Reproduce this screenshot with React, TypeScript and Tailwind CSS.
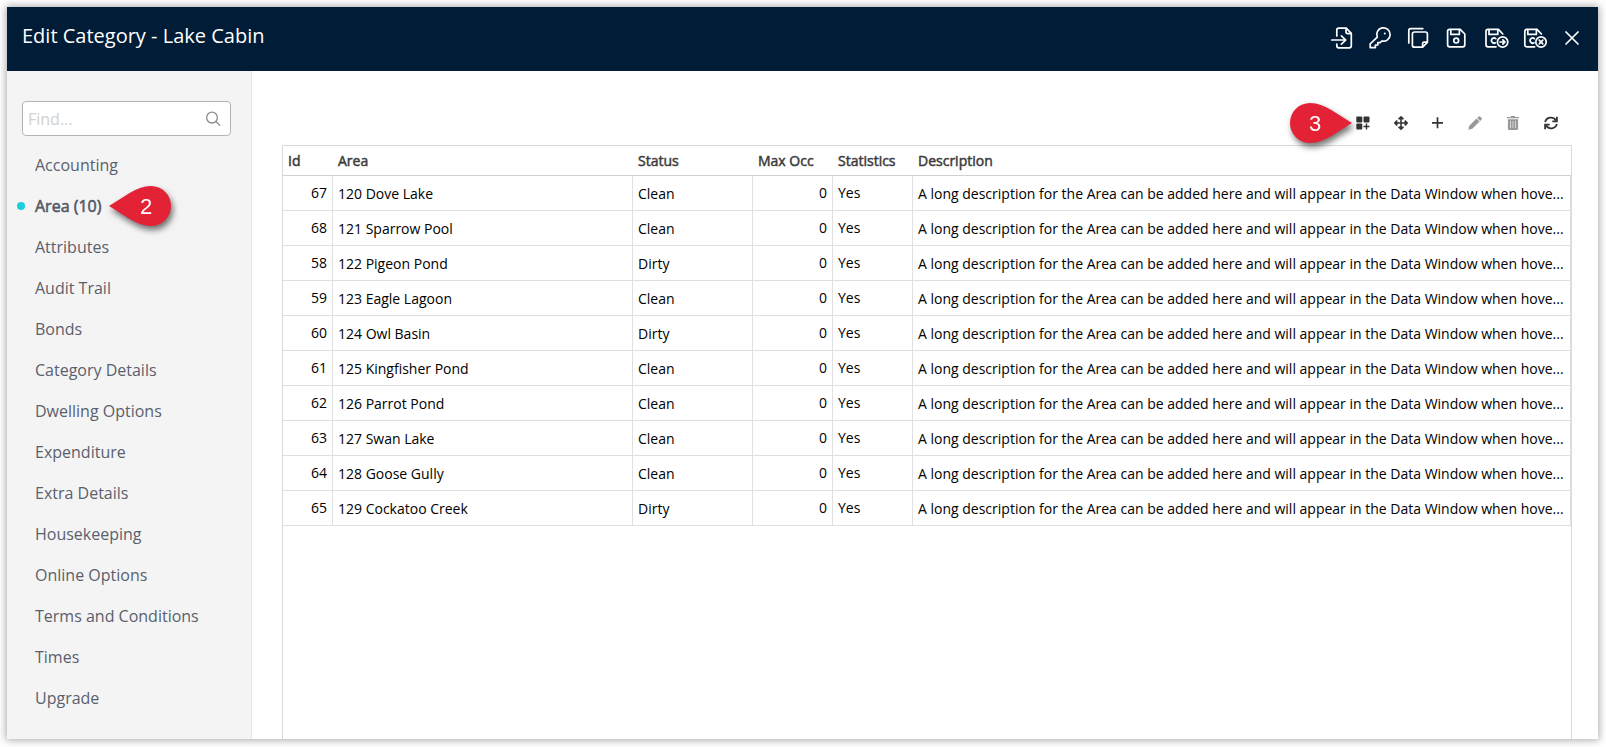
import type { ReactNode } from "react";
import { FaArrowsAlt } from "react-icons/fa";

const sections = [
  "Accounting",
  "Area (10)",
  "Attributes",
  "Audit Trail",
  "Bonds",
  "Category Details",
  "Dwelling Options",
  "Expenditure",
  "Extra Details",
  "Housekeeping",
  "Online Options",
  "Terms and Conditions",
  "Times",
  "Upgrade",
];

const description =
  "A long description for the Area can be added here and will appear in the Data Window when hove...";

const areas = [
  { id: 67, name: "120 Dove Lake", status: "Clean" },
  { id: 68, name: "121 Sparrow Pool", status: "Clean" },
  { id: 58, name: "122 Pigeon Pond", status: "Dirty" },
  { id: 59, name: "123 Eagle Lagoon", status: "Clean" },
  { id: 60, name: "124 Owl Basin", status: "Dirty" },
  { id: 61, name: "125 Kingfisher Pond", status: "Clean" },
  { id: 62, name: "126 Parrot Pond", status: "Clean" },
  { id: 63, name: "127 Swan Lake", status: "Clean" },
  { id: 64, name: "128 Goose Gully", status: "Clean" },
  { id: 65, name: "129 Cockatoo Creek", status: "Dirty" },
];

function Stroke({ width = 24, children }: { width?: number; children: ReactNode }) {
  return (
    <svg
      width={width}
      height={24}
      viewBox={`0 0 ${width} 24`}
      fill="none"
      stroke="currentColor"
      strokeWidth="1.7"
      strokeLinecap="round"
      strokeLinejoin="round"
      aria-hidden="true"
    >
      {children}
    </svg>
  );
}

const headerActions = [
  {
    label: "Open",
    icon: (
      <Stroke>
        <path d="M6.8 10V4.2q0-2 2-2h7.4l5.1 5.2v12.4q0 2-2 2H8.8q-2 0-2-2V18" />
        <path d="M16 2.4v3.4q0 1.8 1.8 1.8h3.4M1.8 14h13.4M11.4 9.8l4.4 4.2-4.4 4.2" />
      </Stroke>
    ),
  },
  {
    label: "Access",
    icon: (
      <Stroke>
        <path d="M9.3 11.2A6.7 6.7 0 1 1 13.8 15l-1.6 1.6H9.8v2.4H7.4v2.6H2.2v-3.8z" />
        <circle cx="16.8" cy="7.4" r="1" fill="currentColor" stroke="none" />
      </Stroke>
    ),
  },
  {
    label: "Copy",
    icon: (
      <Stroke>
        <path d="M2.8 17V4.6q0-2 2-2h12" />
        <path d="M8.4 6h11q2 0 2 2v8.4l-4.8 4.8H8.4q-2 0-2-2V8q0-2 2-2z" />
        <path d="M21.2 16.2h-3q-1.6 0-1.6 1.6v3" />
      </Stroke>
    ),
  },
  {
    label: "Save",
    icon: (
      <Stroke>
        <path d="M5.6 3.4h10.6l4.6 4.6v10.8q0 2-2 2H5.6q-2 0-2-2V5.4q0-2 2-2z" />
        <path d="M6.8 3.6v4.8h8.6V3.6" />
        <circle cx="12.2" cy="14.6" r="2.4" />
      </Stroke>
    ),
  },
  {
    label: "Save and continue",
    icon: (
      <Stroke width={27}>
        <path d="M14 20.8H6q-2 0-2-2V5.4q0-2 2-2h10.4l4.4 4.6" />
        <path d="M7 3.6v4.8h8.8V3.6M13.8 12.6a2.6 2.6 0 1 0-.4 4.2" />
        <circle cx="20.6" cy="16" r="5.2" />
        <path d="M18 16h4.8M20.8 13.8L23 16l-2.2 2.2" />
      </Stroke>
    ),
  },
  {
    label: "Save and close",
    icon: (
      <Stroke>
        <path d="M11.6 20.8H3.8q-2 0-2-2V5.4q0-2 2-2H14l4.4 4.6" />
        <path d="M4.8 3.6v4.8h8.6V3.6M11.4 12.6a2.6 2.6 0 1 0-.4 4.2" />
        <circle cx="18" cy="16" r="5.2" />
        <path d="M16.2 14.2l3.6 3.6M19.8 14.2l-3.6 3.6" />
      </Stroke>
    ),
  },
  {
    label: "Close",
    icon: (
      <Stroke width={22}>
        <path d="M5 6l12 12M17 6L5 18" />
      </Stroke>
    ),
  },
];

function Callout({ text, flip = false }: { text: string; flip?: boolean }) {
  return (
    <svg
      width="62"
      height="40"
      viewBox="0 0 62 40"
      className="block overflow-visible drop-shadow-[2px_4px_3px_rgba(0,0,0,0.55)]"
    >
      <path
        d={
          flip
            ? "M62 20C48 12 35 0 20 0a20 20 0 0 0 0 40C35 40 48 28 62 20z"
            : "M0 20C14 12 27 0 42 0a20 20 0 0 1 0 40C27 40 14 28 0 20z"
        }
        fill="#e42236"
      />
      <text
        x={flip ? 25 : 37}
        y="28"
        textAnchor="middle"
        fill="#fff"
        fontSize="22"
        fontFamily="'Liberation Sans', sans-serif"
      >
        {text}
      </text>
    </svg>
  );
}

function Sidebar() {
  return (
    <aside className="w-[245px] shrink-0 border-r border-[#e6e6e6] bg-[#f4f4f4] pt-[30px] pb-4">
      <div className="mr-5 ml-[15px] flex h-[35px] items-center rounded border border-[#b4b4b4] bg-white pr-[9px] pl-[5px]">
        <input
          type="text"
          placeholder="Find..."
          aria-label="Find"
          className="h-full min-w-0 flex-1 bg-transparent text-base outline-none placeholder:text-[#d0d0d0]"
        />
        <svg width="16" height="16" viewBox="0 0 16 16" fill="none" stroke="#8a8a8a" strokeWidth="1.3" aria-hidden="true">
          <circle cx="7" cy="6.6" r="5.4" />
          <path d="M10.9 10.5l4 3.9" strokeLinecap="round" />
        </svg>
      </div>
      <nav className="pt-2">
        <ul>
          {sections.map((name) => {
            const active = name === "Area (10)";
            return (
              <li key={name} className="flex h-[41px] items-center">
                <span className="flex w-7 justify-center">
                  {active && <span className="size-2 rounded-full bg-[#1ccfdb]" />}
                </span>
                <span className="relative">
                  <a
                    href="#"
                    aria-current={active ? "page" : undefined}
                    className={
                      active
                        ? "text-base text-[#555966] [-webkit-text-stroke:0.6px_#555966]"
                        : "text-base text-[#5a5f6d]"
                    }
                  >
                    {name}
                  </a>
                  {active && (
                    <span className="absolute top-1/2 left-full ml-2 -translate-y-1/2">
                      <Callout text="2" />
                    </span>
                  )}
                </span>
              </li>
            );
          })}
        </ul>
      </nav>
    </aside>
  );
}

function Toolbar() {
  return (
    <div className="flex h-[74px] shrink-0 items-end justify-end gap-6 pr-[14px] pb-[10px] text-[#333]">
      <div className="relative flex">
        <button type="button" aria-label="Quick add" className="flex h-6 w-[14px] items-center justify-center">
          <svg width="14" height="14" viewBox="0 0 14 14" fill="currentColor" aria-hidden="true">
            <rect x="0.3" y="0.6" width="6" height="5.8" rx="1" />
            <rect x="7.5" y="0.6" width="6" height="5.8" rx="1" />
            <rect x="0.3" y="7.6" width="6" height="5.8" rx="1" />
            <path d="M9.8 7.6h1.4v2.2h2.3v1.5h-2.3v2.2H9.8v-2.2H7.5V9.8h2.3z" />
          </svg>
        </button>
        <span className="absolute top-1/2 right-full mr-1 -translate-y-1/2">
          <Callout text="3" flip />
        </span>
      </div>
      <button type="button" aria-label="Move" className="flex h-6 w-[14px] items-center justify-center">
        <FaArrowsAlt size={14} />
      </button>
      <button type="button" aria-label="Add" className="flex h-6 w-3 items-center justify-center">
        <svg width="12" height="12" viewBox="0 0 12 12" stroke="currentColor" strokeWidth="1.7" aria-hidden="true">
          <path d="M5.5 .3v11M0 5.8h11" />
        </svg>
      </button>
      <button type="button" aria-label="Edit" className="flex h-6 w-[14px] items-center justify-center text-[#999]">
        <svg width="14" height="14" viewBox="0 0 14 14" fill="currentColor" aria-hidden="true">
          <path d="M10.4.7q1-.9 1.9 0l1.1 1.1q.9 1 0 1.9l-1.2 1.2-3-3z" />
          <path d="M8.5 2.4l3.1 3.1-7.3 7.3L.3 13.8l1-4.1z" />
        </svg>
      </button>
      <button type="button" aria-label="Delete" className="flex h-6 w-[14px] items-center justify-center text-[#999]">
        <svg width="12" height="14" viewBox="0 0 12 14" aria-hidden="true">
          <path d="M0 .9h3.6L4.2 0h3.6l.6.9H12v1.4H0z" fill="currentColor" />
          <path d="M.9 3.2h10.2v9.3q0 1.5-1.5 1.5H2.4Q.9 14 .9 12.5z" fill="currentColor" />
          <path d="M3.5 5v7M6 5v7M8.5 5v7" stroke="#fff" strokeWidth="0.6" />
        </svg>
      </button>
      <button type="button" aria-label="Refresh" className="flex h-6 w-[14px] items-center justify-center">
        <svg width="14" height="14" viewBox="0 0 14 14" fill="none" stroke="currentColor" strokeWidth="1.8" aria-hidden="true">
          <path d="M1.1 6A6 6 0 0 1 11.9 4.4M12.9 8A6 6 0 0 1 2.1 9.6" />
          <path d="M12.9.7v4.6H8.3M1.1 13.3V8.7h4.6" />
        </svg>
      </button>
    </div>
  );
}

const cell = "truncate border-r border-b border-[#e0e0e0] px-[5px]";
const textCell = "truncate border-r border-b border-[#e0e0e0] px-[5px] pt-[2px]";

function AreaTable() {
  return (
    <div className="flex-1 border-x border-t border-[#d9d9d9]">
      <table className="w-full table-fixed border-separate border-spacing-0 text-sm text-black">
        <colgroup>
          <col className="w-[50px]" />
          <col className="w-[300px]" />
          <col className="w-[120px]" />
          <col className="w-[80px]" />
          <col className="w-[80px]" />
          <col />
        </colgroup>
        <thead>
          <tr className="h-[30px] text-left text-[#3c3c3c] [-webkit-text-stroke:0.5px_#3c3c3c]">
            {["Id", "Area", "Status", "Max Occ", "Statistics", "Description"].map((h) => (
              <th key={h} scope="col" className="border-b border-[#d0d0d0] px-[5px] font-normal whitespace-nowrap">
                {h}
              </th>
            ))}
          </tr>
        </thead>
        <tbody>
          {areas.map((a) => (
            <tr key={a.id} className="h-[35px]">
              <td className={`${cell} text-right`}>{a.id}</td>
              <td className={textCell}>{a.name}</td>
              <td className={textCell}>{a.status}</td>
              <td className={`${cell} text-right`}>0</td>
              <td className={cell}>Yes</td>
              <td className={textCell}>{description}</td>
            </tr>
          ))}
        </tbody>
      </table>
    </div>
  );
}

export default function App() {
  return (
    <div className="flex min-h-screen bg-white pt-[7px] pr-2 pb-2 pl-[7px] font-['Open_Sans',sans-serif]">
      <div className="flex min-w-0 flex-1 flex-col bg-white shadow-[0_0_8px_1px_rgba(0,0,0,0.35)]">
        <header className="flex h-16 shrink-0 items-center justify-between bg-[#001c37] px-[15px] text-white">
          <h1 className="pb-[6px] text-xl">Edit Category - Lake Cabin</h1>
          <div className="flex items-center gap-[14px] pb-[2px]">
            {headerActions.map((a) => (
              <button key={a.label} type="button" aria-label={a.label}>
                {a.icon}
              </button>
            ))}
          </div>
        </header>
        <div className="flex flex-1">
          <Sidebar />
          <main className="flex min-w-0 flex-1 flex-col pr-[26px] pl-[30px]">
            <Toolbar />
            <AreaTable />
          </main>
        </div>
      </div>
    </div>
  );
}
